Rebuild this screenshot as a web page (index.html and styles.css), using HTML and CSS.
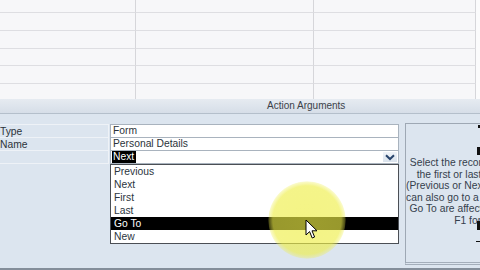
FILE: index.html
```html
<!DOCTYPE html>
<html>
<head>
<meta charset="utf-8">
<link rel="stylesheet" href="styles.css">
</head>
<body>
<div class="sheet">
  <div class="cell"></div><div class="cell"></div><div class="cell"></div><div class="edge"></div>
  <div class="cell"></div><div class="cell"></div><div class="cell"></div><div class="edge"></div>
  <div class="cell"></div><div class="cell"></div><div class="cell"></div><div class="edge"></div>
  <div class="cell"></div><div class="cell"></div><div class="cell"></div><div class="edge"></div>
  <div class="cell"></div><div class="cell"></div><div class="cell"></div><div class="edge"></div>
  <div class="cell last"></div><div class="cell last"></div><div class="cell last"></div><div class="edge"></div>
</div>
<div class="bar">Action Arguments</div>
<div class="panel">
  <div class="args">
    <div class="label">Type</div>
    <div class="field">Form</div>
    <div class="label">Name</div>
    <div class="field">Personal Details</div>
    <div class="label"></div>
    <div class="field combo">
      <span class="sel">Next</span>
      <span class="arrow"><svg width="10" height="7" viewBox="0 0 10 7"><path d="M1 1.2 L5 5 L9 1.2" fill="none" stroke="#27436b" stroke-width="2"/></svg></span>
    </div>
    <ul class="list">
      <li>Previous</li>
      <li>Next</li>
      <li>First</li>
      <li>Last</li>
      <li class="active">Go To</li>
      <li>New</li>
    </ul>
  </div>
  <div class="help">
    <p>Select the record to make the current record.<br>the first or last record, the previous record<br>(Previous or Next), or a new record (New). You<br>can also go to a specific record. Next, Previous<br>Go To are affected by the Offset value. Press<br>F1 for help on this action.</p>
  </div>
</div>
<div class="spot"></div>
<svg class="cursor" width="13" height="21" viewBox="0 0 13 21"><path d="M1 1 L1 16 L4.6 12.6 L7.2 19 L9.6 18 L7 11.8 L12 11.8 Z" fill="#fff" stroke="#000" stroke-width="1" stroke-linejoin="round"/></svg>
<div class="marks"><span class="m1"></span><span class="m2"></span><span class="m3"></span><span class="m4"></span></div>
</body>
</html>
```
FILE: styles.css
```css
* { box-sizing: border-box; }
html, body { margin: 0; padding: 0; }
body {
  width: 480px;
  height: 270px;
  overflow: hidden;
  position: relative;
  background: #dce5ef;
  font-family: "Liberation Sans", Arial, sans-serif;
  color: #2e3740;
}
.sheet {
  display: grid;
  grid-template-columns: 136px 178px 162px 4px;
  grid-template-rows: 13px 18px 18px 17px 18px 15px;
  height: 99px;
  background: #f7f7f9;
}
.cell {
  border-right: 1px solid #d6d6da;
  border-bottom: 1px solid #dedee2;
}
.cell.last { border-bottom: none; }
.edge { background: #fbfbfc; }
.bar {
  height: 15px;
  background: linear-gradient(#e6ebf1, #d6dee8);
  border-bottom: 1px solid #b4bfcb;
  font-size: 10px;
  line-height: 14px;
  padding-left: 267px;
  color: #3b424a;
}
.panel {
  display: flex;
  align-items: flex-start;
  height: 156px;
  padding-top: 10px;
  border-bottom: 2px solid #848e9a;
}
.args {
  position: relative;
  display: grid;
  grid-template-columns: 109px 290px;
  grid-template-rows: 13px 13px 14px;
  width: 399px;
}
.label {
  font-size: 10.3px;
  line-height: 12px;
  padding-top: 1px;
  border-top: 1px solid #eef2f7;
  border-right: 1px solid #eef2f7;
  color: #2c333a;
}
.args .label:nth-of-type(5) { border-bottom: 1px solid #eef2f7; }
.field {
  background: #fff;
  border: 1px solid #a9b3be;
  border-bottom: none;
  margin-left: 1px;
  font-size: 10.3px;
  line-height: 12px;
  padding-left: 2px;
  color: #2c333a;
}
.combo {
  display: flex;
  align-items: center;
  justify-content: space-between;
  border-bottom: 1px solid #a9b3be;
  padding-left: 1px;
}
.sel {
  background: #000;
  color: #fff;
  padding: 0 2px 0 1px;
  line-height: 12px;
}
.arrow {
  display: flex;
  align-items: center;
  justify-content: center;
  width: 14px;
  height: 10px;
  margin-right: 1px;
  background: linear-gradient(#f0f4f9, #d9e2ec);
}
.list {
  position: absolute;
  left: 110px;
  top: 40px;
  width: 289px;
  height: 80px;
  margin: 0;
  padding: 0;
  list-style: none;
  background: #fff;
  border: 1px solid #4b4f55;
  font-size: 10.3px;
  color: #2c3540;
}
.list li {
  height: 13px;
  line-height: 13px;
  padding-left: 3px;
}
.list li.active {
  background: #000;
  color: #fff;
}
.help {
  margin-left: 6px;
  margin-top: -1px;
  width: 214px;
  flex-shrink: 0;
  height: 142px;
  border: 1px solid #9ea8b4;
  border-bottom: 3px double #a4aeba;
}
.help p {
  margin: 0;
  padding-top: 33px;
  text-align: center;
  white-space: nowrap;
  font-size: 10.3px;
  line-height: 11.5px;
  color: #35404c;
}
.spot {
  position: absolute;
  left: 268px;
  top: 181px;
  width: 78px;
  height: 78px;
  border-radius: 50%;
  background: radial-gradient(circle, rgba(238,238,70,0.66) 0%, rgba(238,238,70,0.64) 62%, rgba(238,238,70,0.3) 69%, rgba(238,238,70,0) 71%);
}
.cursor {
  position: absolute;
  left: 305px;
  top: 219px;
}
.marks span {
  position: absolute;
  right: 0;
  width: 3px;
  background: #111;
}
.marks .m1 { top: 125px; height: 3px; width: 2px; }
.marks .m2 { top: 147px; height: 8px; }
.marks .m3 { top: 221px; height: 9px; }
.marks .m4 { top: 241px; height: 1px; width: 4px; }
```
